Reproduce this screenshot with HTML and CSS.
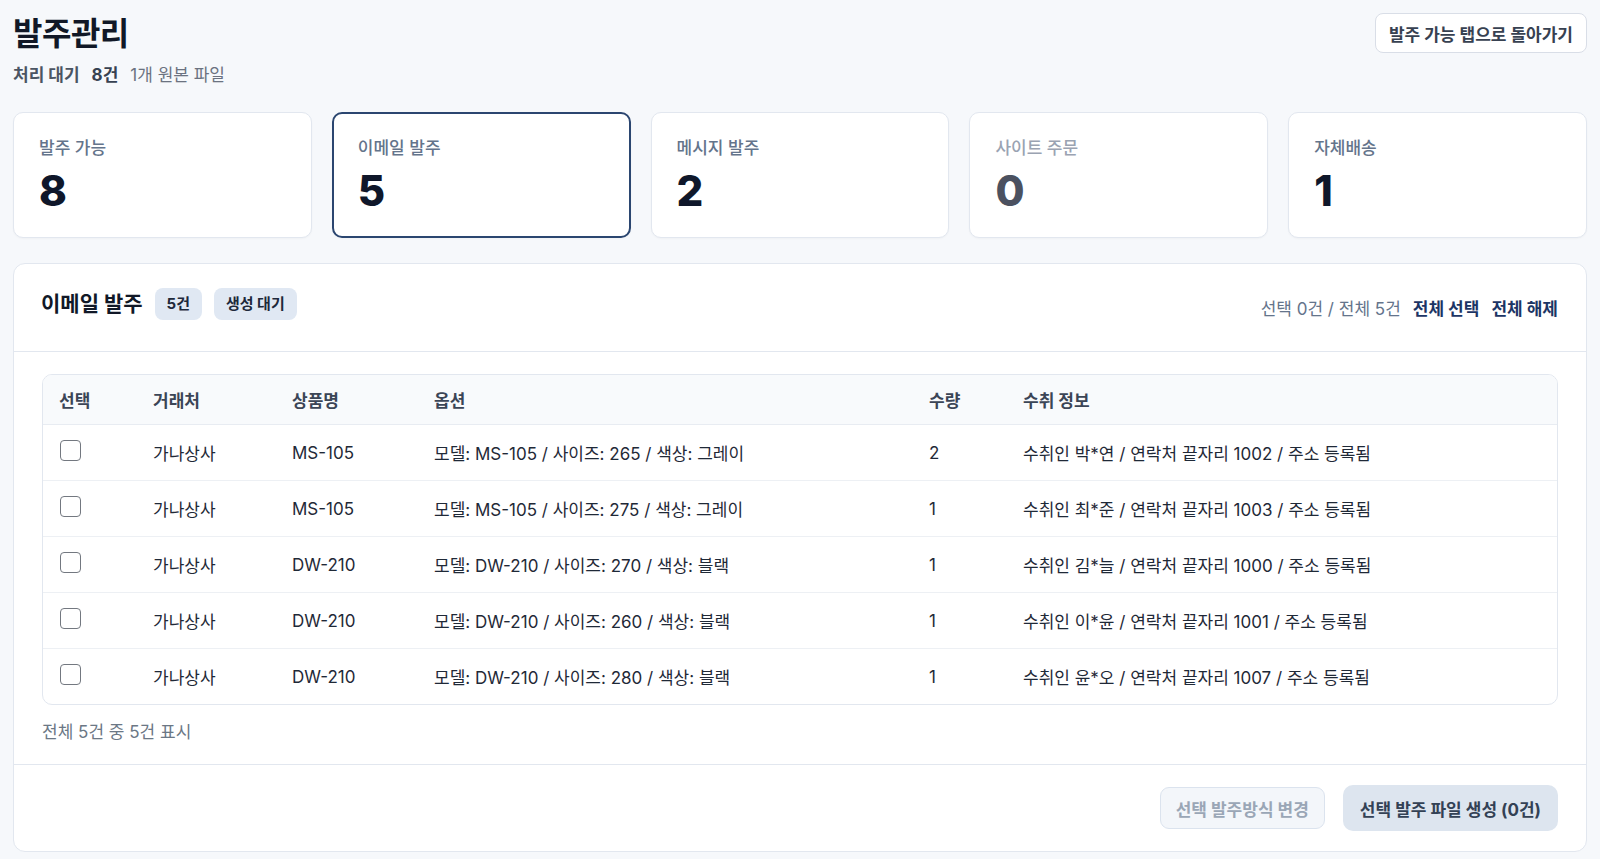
FILE: index.html
```html
<!DOCTYPE html>
<html lang="ko">
<head>
    <meta charset="UTF-8">
    <meta name="viewport" content="width=device-width, initial-scale=1.0">
    <title>발주관리</title>
    <link rel="stylesheet" href="styles.css">
</head>
<body>
    <div class="page-head">
        <div class="head-left">
            <h1 class="page-title">발주관리</h1>
            <div class="page-sub">
                <span class="sub-label">처리 대기</span>
                <span class="sub-count">8건</span>
                <span class="sub-note">1개 원본 파일</span>
            </div>
        </div>
        <button class="btn-back">발주 가능 탭으로 돌아가기</button>
    </div>

    <div class="stat-row">
        <div class="stat-card">
            <div class="stat-label">발주 가능</div>
            <div class="stat-value">8</div>
        </div>
        <div class="stat-card active">
            <div class="stat-label">이메일 발주</div>
            <div class="stat-value">5</div>
        </div>
        <div class="stat-card">
            <div class="stat-label">메시지 발주</div>
            <div class="stat-value">2</div>
        </div>
        <div class="stat-card muted">
            <div class="stat-label">사이트 주문</div>
            <div class="stat-value">0</div>
        </div>
        <div class="stat-card">
            <div class="stat-label">자체배송</div>
            <div class="stat-value">1</div>
        </div>
    </div>

    <div class="panel">
        <div class="panel-head">
            <div class="panel-title">
                <h2>이메일 발주</h2>
                <span class="badge">5건</span>
                <span class="badge">생성 대기</span>
            </div>
            <div class="panel-tools">
                <span class="sel-count">선택 0건 / 전체 5건</span>
                <button class="link-btn">전체 선택</button>
                <button class="link-btn">전체 해제</button>
            </div>
        </div>

        <div class="panel-body">
            <div class="table-wrap">
                <table class="order-table">
                    <colgroup>
                        <col class="c-check">
                        <col class="c-vendor">
                        <col class="c-product">
                        <col class="c-option">
                        <col class="c-qty">
                        <col>
                    </colgroup>
                    <thead>
                        <tr>
                            <th>선택</th>
                            <th>거래처</th>
                            <th>상품명</th>
                            <th>옵션</th>
                            <th>수량</th>
                            <th>수취 정보</th>
                        </tr>
                    </thead>
                    <tbody>
                        <tr>
                            <td><input type="checkbox" class="check"></td>
                            <td>가나상사</td>
                            <td>MS-105</td>
                            <td>모델: MS-105 / 사이즈: 265 / 색상: 그레이</td>
                            <td>2</td>
                            <td>수취인 박*연 / 연락처 끝자리 1002 / 주소 등록됨</td>
                        </tr>
                        <tr>
                            <td><input type="checkbox" class="check"></td>
                            <td>가나상사</td>
                            <td>MS-105</td>
                            <td>모델: MS-105 / 사이즈: 275 / 색상: 그레이</td>
                            <td>1</td>
                            <td>수취인 최*준 / 연락처 끝자리 1003 / 주소 등록됨</td>
                        </tr>
                        <tr>
                            <td><input type="checkbox" class="check"></td>
                            <td>가나상사</td>
                            <td>DW-210</td>
                            <td>모델: DW-210 / 사이즈: 270 / 색상: 블랙</td>
                            <td>1</td>
                            <td>수취인 김*늘 / 연락처 끝자리 1000 / 주소 등록됨</td>
                        </tr>
                        <tr>
                            <td><input type="checkbox" class="check"></td>
                            <td>가나상사</td>
                            <td>DW-210</td>
                            <td>모델: DW-210 / 사이즈: 260 / 색상: 블랙</td>
                            <td>1</td>
                            <td>수취인 이*윤 / 연락처 끝자리 1001 / 주소 등록됨</td>
                        </tr>
                        <tr>
                            <td><input type="checkbox" class="check"></td>
                            <td>가나상사</td>
                            <td>DW-210</td>
                            <td>모델: DW-210 / 사이즈: 280 / 색상: 블랙</td>
                            <td>1</td>
                            <td>수취인 윤*오 / 연락처 끝자리 1007 / 주소 등록됨</td>
                        </tr>
                    </tbody>
                </table>
            </div>
            <div class="table-foot">전체 5건 중 5건 표시</div>
        </div>

        <div class="panel-foot">
            <button class="btn-ghost" disabled>선택 발주방식 변경</button>
            <button class="btn-main" disabled>선택 발주 파일 생성 (0건)</button>
        </div>
    </div>
</body>
</html>
```

FILE: styles.css
```css
html, body {
    margin: 0;
    padding: 0;
}

body {
    background: #f6f8fb;
    font-family: Inter, "Noto Sans CJK KR", sans-serif;
    color: #1f2937;
    padding: 13px 13px 8px;
}

button {
    font-family: inherit;
}

/* header */
.page-head {
    display: flex;
    justify-content: space-between;
    align-items: flex-start;
}

.page-title {
    margin: 0;
    padding-top: 2px;
    font-size: 32px;
    line-height: 38px;
    font-weight: 700;
    color: #111827;
    letter-spacing: -0.5px;
}

.page-sub {
    display: flex;
    gap: 12px;
    margin-top: 10px;
    font-size: 17px;
    line-height: 24px;
}

.sub-label {
    font-weight: 700;
    color: #4b5563;
}

.sub-count {
    font-weight: 700;
    color: #374151;
}

.sub-note {
    color: #6b7280;
}

.btn-back {
    height: 40px;
    padding: 0 13px;
    background: #fff;
    border: 1px solid #d9dee7;
    border-radius: 8px;
    font-size: 17px;
    font-weight: 700;
    color: #374151;
    cursor: pointer;
}

/* stat cards */
.stat-row {
    display: grid;
    grid-template-columns: repeat(5, 1fr);
    gap: 20px;
    margin-top: 25px;
}

.stat-card {
    background: #fff;
    border: 1px solid #e2e7ef;
    border-radius: 10px;
    padding: 23px 25px 23px;
    box-shadow: 0 1px 2px rgba(15, 23, 42, 0.03);
}

.stat-card.active {
    border: 2px solid #2b4670;
    padding: 22px 24px 22px;
}

.stat-label {
    font-size: 17px;
    line-height: 24px;
    font-weight: 500;
    color: #64748b;
}

.stat-value {
    margin-top: 8px;
    font-size: 42px;
    line-height: 46px;
    font-weight: 800;
    color: #0f172a;
}

.stat-card.muted .stat-label {
    color: #9aa3b2;
}

.stat-card.muted .stat-value {
    color: #4b5160;
}

/* panel */
.panel {
    margin-top: 25px;
    background: #fff;
    border: 1px solid #e2e7ef;
    border-radius: 12px;
}

.panel-head {
    height: 87px;
    display: flex;
    justify-content: space-between;
    align-items: center;
    padding: 0 28px 0 27px;
    border-bottom: 1px solid #e2e7ef;
}

.panel-title {
    display: flex;
    align-items: center;
    gap: 12px;
    margin-top: -7px;
}

.panel-title h2 {
    margin: 0;
    font-size: 21px;
    line-height: 28px;
    font-weight: 700;
    color: #111827;
}

.badge {
    height: 32px;
    line-height: 32px;
    padding: 0 12px;
    border-radius: 8px;
    background: #e0e8f3;
    font-size: 15px;
    font-weight: 700;
    color: #1e293b;
}

.panel-tools {
    display: flex;
    align-items: center;
    gap: 12px;
    font-size: 17px;
}

.sel-count {
    color: #64748b;
}

.link-btn {
    background: none;
    border: none;
    padding: 0;
    font-size: 17px;
    font-weight: 700;
    color: #1c3565;
    cursor: pointer;
}

.panel-body {
    padding: 22px 28px 20px;
}

.table-wrap {
    border: 1px solid #e2e7ef;
    border-radius: 10px;
    overflow: hidden;
}

.order-table {
    width: 100%;
    border-collapse: collapse;
    table-layout: fixed;
    font-size: 17px;
}

.c-check { width: 94px; }
.c-vendor { width: 139px; }
.c-product { width: 142px; }
.c-option { width: 495px; }
.c-qty { width: 94px; }

.order-table th {
    height: 49px;
    padding: 0 16px;
    text-align: left;
    font-weight: 700;
    color: #3b4556;
    background: #f8fafc;
    border-bottom: 1px solid #e8ecf2;
}

.order-table td {
    height: 55px;
    padding: 0 16px;
    color: #1f2937;
    border-bottom: 1px solid #edf0f4;
    white-space: nowrap;
}

.order-table tbody tr:last-child td {
    border-bottom: none;
}

.check {
    appearance: none;
    display: block;
    margin: 0 0 0 1px;
    width: 21px;
    height: 21px;
    border: 1.5px solid #737880;
    border-radius: 4px;
    background: #fff;
    position: relative;
    top: -2px;
}

.table-foot {
    margin-top: 15px;
    font-size: 17px;
    line-height: 24px;
    color: #6b7785;
}

.panel-foot {
    display: flex;
    justify-content: flex-end;
    align-items: center;
    gap: 18px;
    padding: 20px 28px 20px;
    border-top: 1px solid #e2e7ef;
}

.btn-ghost {
    height: 42px;
    padding: 0 15px;
    background: #f3f6fa;
    border: 1px solid #dbe3ee;
    border-radius: 9px;
    font-size: 17px;
    font-weight: 700;
    color: #9aa6b6;
}

.btn-main {
    height: 46px;
    padding: 0 17px;
    background: #dde5ef;
    border: none;
    border-radius: 10px;
    font-size: 17px;
    font-weight: 700;
    color: #334155;
}
```
